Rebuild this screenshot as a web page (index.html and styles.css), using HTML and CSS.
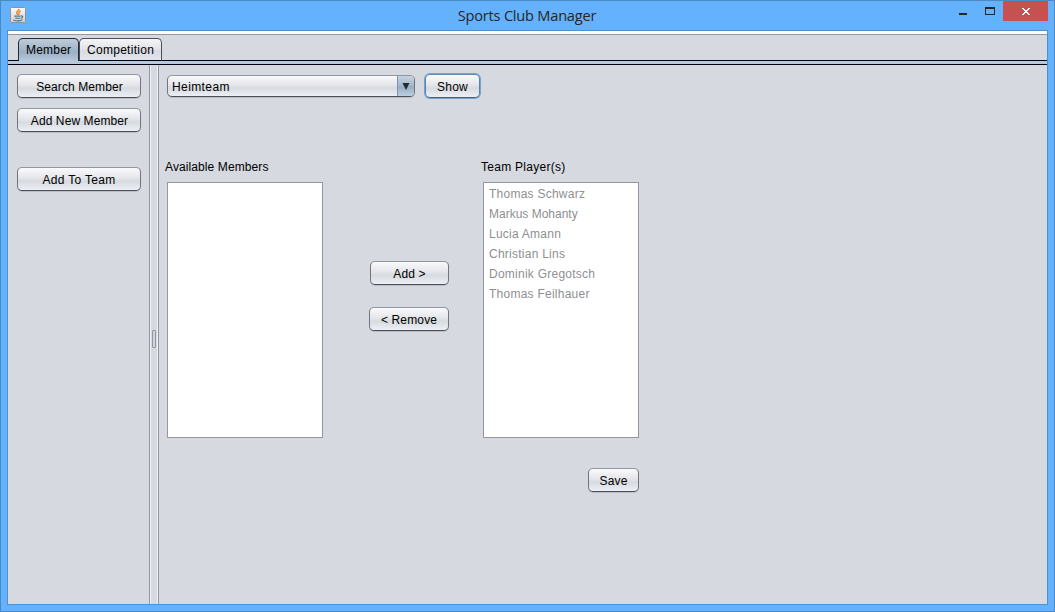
FILE: index.html
```html
<!DOCTYPE html>
<html lang="en">
<head>
<meta charset="utf-8">
<title>Sports Club Manager</title>
<link rel="stylesheet" href="styles.css">
</head>
<body>
<div class="window">
  <header class="titlebar">
    <svg class="app-icon" width="16" height="16" viewBox="0 0 16 16">
      <defs><linearGradient id="tile" x1="0" y1="0" x2="0" y2="1"><stop offset="0" stop-color="#fbfbfb"/><stop offset="1" stop-color="#cfcfcf"/></linearGradient></defs>
      <rect x=".5" y=".5" width="15" height="15" rx="1" fill="url(#tile)" stroke="#8f9398"/>
      <path d="M8.800 1.800c.8 1.700-2.500 2.300-2.200 4 .1.900 1.100 1.300 1.200 2.300M10.700 3.800C8.900 4.700 8.500 5.300 9.100 6.200c.4.700 0 1.200-.4 1.800" fill="none" stroke="#ec7a28" stroke-width="1.300"/>
      <path d="M4.300 9.200h6.200M5 11c1.700.5 3.600.5 5.200 0M3.300 13c2.500 1 6.900.9 9.200-.2M11 8.900c2.300-.4 2.200 1.800-.2 2.400" fill="none" stroke="#4f7896" stroke-width="1.200"/>
    </svg>
    <h1 class="title">Sports Club Manager</h1>
    <div class="controls">
      <svg width="40" height="20" viewBox="0 0 40 20"><path d="M0 12h8v2H0z" fill="#262626"/><path d="M26 6h10v8H26z M27 8v5h8V8z" fill="#262626" fill-rule="evenodd"/></svg>
      <div class="close"><svg width="8" height="7" viewBox="0 0 8 7"><path d="M0 0h2v1h1v1h2V1h1V0h2v1H7v1H6v1H5v1h1v1h1v1h1v1H6V6H5V5H3v1H2v1H0V6h1V5h1V4h1V3H2V2H1V1H0z" fill="#fff"/></svg></div>
    </div>
  </header>
  <div class="client">
    <nav class="tabs">
      <div class="tab selected">Member</div>
      <div class="tab competition">Competition</div>
    </nav>
    <div class="panes">
      <aside class="sidebar">
        <button class="btn tight">Search Member</button>
        <button class="btn tight">Add New Member</button>
        <button class="btn team">Add To Team</button>
      </aside>
      <div class="divider"><span class="grip"></span></div>
      <main class="main">
        <div class="toolbar">
          <div class="combo"><span>Heimteam</span><div class="arrow"><svg width="8" height="7" viewBox="0 0 8 7"><path d="M.5 0h7L4 7z" fill="#222a33"/></svg></div></div>
          <button class="btn show">Show</button>
        </div>
        <div class="transfer">
          <section class="column">
            <h2 class="tight">Available Members</h2>
            <ul class="list"></ul>
          </section>
          <div class="actions">
            <button class="btn add">Add &gt;</button>
            <button class="btn">&lt; Remove</button>
          </div>
          <section class="column">
            <h2 class="wide">Team Player(s)</h2>
            <ul class="list">
              <li>Thomas Schwarz</li><li class="narrow">Markus Mohanty</li><li>Lucia Amann</li>
              <li>Christian Lins</li><li>Dominik Gregotsch</li><li>Thomas Feilhauer</li>
            </ul>
            <button class="btn save">Save</button>
          </section>
        </div>
      </main>
    </div>
  </div>
</div>
</body>
</html>
```
FILE: styles.css
```css
* { box-sizing: border-box; }
body { margin: 0; font: 12px/14px "Liberation Sans", Arial, sans-serif; letter-spacing: .2px; color: #000; }
.window { width: 1055px; height: 612px; background: #64b2fd; border: 1px solid #4a89c3; padding: 0 6px 6px; display: flex; flex-direction: column; }
.titlebar { height: 29px; flex: none; display: grid; grid-template-columns: 160px 1fr 160px; }
.app-icon { margin: 6px 0 0 3px; }
.title { margin: 4px 1px 0 0; text-align: center; font: 14.6px/20px "Open Sans", sans-serif; letter-spacing: -.22px; color: #262626; }
.controls { display: flex; justify-content: flex-end; gap: 4px; }
.close { width: 45px; height: 20px; background: #c75050; display: flex; align-items: center; justify-content: center; }
.client { flex: 1; border: 1px solid #4c92d2; background: #d6d9df; display: flex; flex-direction: column; }
.tabs { height: 34px; flex: none; display: flex; align-items: flex-end; padding: 0 10px 4px; background: linear-gradient(#fff 3px, #9297a1 3px, #9297a1 4px, #d6d9df 4px, #d6d9df 29px, #000019 29px, #000019 30px, #b8c9dc 30px, #b8c9dc 33px, #000019 33px); }
.tab { height: 23px; padding: 4px 7px 0; border: 1px solid #4b4f56; border-bottom-color: #000019; border-radius: 5px 5px 0 0; background: linear-gradient(#f4f5f8, #e0e2e7 50%, #d7dae0 51%, #e2e6ed); }
.tab.selected { width: 61px; border-color: #1d2b39; border-bottom: 0; background: linear-gradient(#c0ccd8, #a1b5c8 50%, #9bb0c3 60%, #b8c9dc); }
.tab.competition { width: 83px; letter-spacing: .28px; }
.panes { flex: 1; display: flex; }
.sidebar { width: 141px; padding: 9px 8px 0 9px; display: flex; flex-direction: column; gap: 10px; }
.btn { flex: none; height: 24px; padding: 1px 0 0; border: 1px solid; border-color: #92969d #71747b #4c4f54; border-radius: 5px; background: linear-gradient(#fafafc, #e4e6ea 45%, #d7dade 60%, #eceff6); box-shadow: 0 1px 0 #babec7; font: inherit; letter-spacing: inherit; color: #000; text-align: center; }
.btn.tight { padding-left: 1px; letter-spacing: .1px; }
.btn.team { margin-top: 25px; letter-spacing: .3px; }
.divider { width: 10px; border: 1px solid #9297a1; border-width: 0 1px; box-shadow: inset 1px 0 #eef0f5, inset -1px 0 #eef0f5; display: flex; align-items: center; justify-content: center; }
.grip { width: 4px; height: 18px; margin-top: 9px; border: 1px solid #9297a1; border-radius: 1px; background: #cfd3dc; }
.main { flex: 1; padding: 9px 0 0 6px; }
.toolbar { display: flex; gap: 10px; padding-left: 2px; margin-bottom: 62px; }
.combo { width: 248px; height: 22px; margin-top: 1px; border: 1px solid; border-color: #92969d #71747b #4c4f54; border-radius: 5px; background: linear-gradient(#fafafc, #e4e6ea 45%, #d7dade 60%, #eceff6); box-shadow: 0 1px 0 #babec7; display: flex; justify-content: space-between; align-items: center; padding-left: 4px; overflow: hidden; letter-spacing: .4px; }
.combo span { padding-top: 1px; }
.arrow { width: 17px; height: 22px; border-left: 1px solid #7a93aa; background: linear-gradient(#c9d6e2, #a6bacd 45%, #98afc4 55%, #bfd2e5); display: flex; align-items: center; justify-content: center; }
.show { width: 55px; border-color: #6488ab #5b82a8 #44637f; box-shadow: 0 0 0 1px #73a4d1; }
.transfer { display: flex; }
.column { width: 158px; display: flex; flex-direction: column; }
.column h2 { margin: 0 0 8px; font: inherit; }
.column h2.tight { letter-spacing: .1px; }
.column h2.wide { letter-spacing: .28px; }
.list { width: 156px; height: 256px; margin: 0 0 0 2px; padding: 1px 5px; border: 1px solid #9297a1; background: #fff; list-style: none; line-height: 20px; letter-spacing: .25px; color: #8e8f91; }
.list .narrow { letter-spacing: 0; }
.actions { width: 158px; padding: 101px 32px 0 46px; display: flex; flex-direction: column; gap: 22px; }
.actions .btn { letter-spacing: .15px; }
.actions .add { margin-left: 1px; }
.save { width: 51px; margin: 30px 0 0 107px; }
```
